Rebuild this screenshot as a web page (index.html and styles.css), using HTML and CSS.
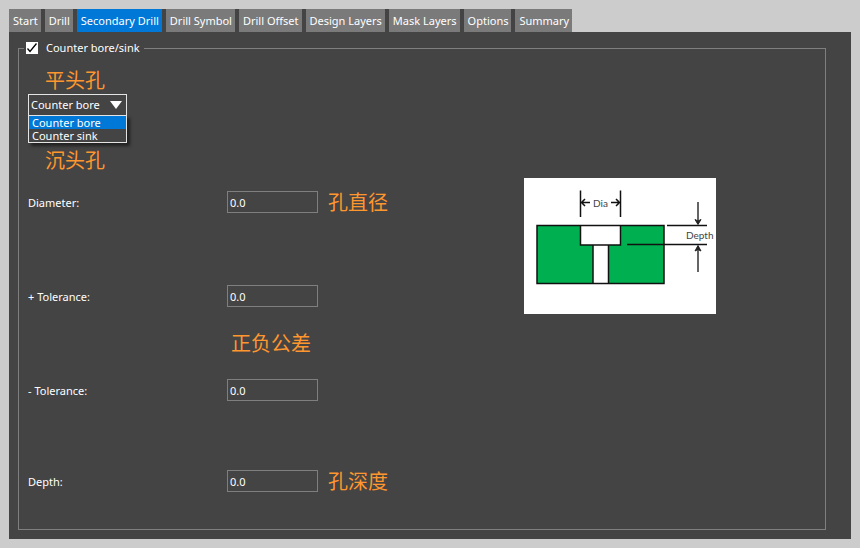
FILE: index.html
```html
<!DOCTYPE html>
<html lang="zh-CN">
<head>
<meta charset="utf-8">
<title>Secondary Drill</title>
<link rel="stylesheet" href="styles.css">
</head>
<body>
<nav class="tabs" role="tablist">
  <button class="tab" type="button" role="tab">Start</button>
  <button class="tab" type="button" role="tab">Drill</button>
  <button class="tab active" type="button" role="tab" aria-selected="true">Secondary Drill</button>
  <button class="tab" type="button" role="tab">Drill Symbol</button>
  <button class="tab" type="button" role="tab">Drill Offset</button>
  <button class="tab" type="button" role="tab">Design Layers</button>
  <button class="tab" type="button" role="tab">Mask Layers</button>
  <button class="tab" type="button" role="tab">Options</button>
  <button class="tab" type="button" role="tab">Summary</button>
</nav>
<main class="panel">
  <fieldset class="group">
    <legend class="legend"><input class="check" type="checkbox" id="counter" checked><label for="counter">Counter bore/sink</label></legend>
    <div class="kind">
      <p class="note">平头孔</p>
      <div class="combo">
        <select class="combo-box" aria-label="Counter type">
          <option selected>Counter bore</option>
          <option>Counter sink</option>
        </select>
        <svg class="combo-arrow" viewBox="0 0 12 8" aria-hidden="true"><path d="M0 0H12L6 8Z" fill="#fff"/></svg>
        <ul class="combo-list" role="listbox" aria-label="Counter type options">
          <li class="choice selected" role="option" aria-selected="true">Counter bore</li>
          <li class="choice" role="option">Counter sink</li>
        </ul>
      </div>
      <p class="note">沉头孔</p>
    </div>
    <div class="details">
      <div class="fields">
        <div class="row"><label class="caption" for="diameter">Diameter:</label><input class="field" id="diameter" type="text" value="0.0"><span class="note">孔直径</span></div>
        <div class="tolerance">
          <div class="row"><label class="caption" for="plus">+ Tolerance:</label><input class="field" id="plus" type="text" value="0.0"></div>
          <div class="row"><span class="note between">正负公差</span></div>
          <div class="row"><label class="caption" for="minus">- Tolerance:</label><input class="field" id="minus" type="text" value="0.0"></div>
        </div>
        <div class="row"><label class="caption" for="depth">Depth:</label><input class="field" id="depth" type="text" value="0.0"><span class="note">孔深度</span></div>
      </div>
      <svg class="diagram" viewBox="0 0 192 136" role="img" aria-label="Counter bore section">
        <rect width="192" height="136" fill="#fff"/>
        <rect x="13" y="47.500" width="127" height="58" fill="#00b050"/>
        <path d="M56.500 47.500H96.500V67H84.500V105.500H69V67H56.500Z" fill="#fff"/>
        <g fill="none" stroke="#111" stroke-width="1.500">
          <rect x="13" y="47.500" width="127" height="58"/>
          <path d="M56.500 47.500V67H96.500V47.500M69 67V105.500M84.500 67V105.500"/>
          <path d="M56.500 12.500V39M96.500 12.500V39M143 47.500H183M103 66.500H183"/>
          <path d="M57.500 24.500H66M61 21L57.500 24.500L61 28M95.500 24.500H87M92 21L95.500 24.500L92 28"/>
          <path d="M174 24V46M174 68V94" stroke="#333"/>
        </g>
        <path d="M171 41.500L174 43L177 41.500L174 46.500ZM171 73L174 71.500L177 73L174 67.500Z" fill="#222" stroke="#222"/>
        <text class="diagram-text" x="69" y="29">Dia</text>
        <text class="diagram-text" x="162" y="61">Depth</text>
      </svg>
    </div>
  </fieldset>
</main>
</body>
</html>
```
FILE: styles.css
```css
* { box-sizing: border-box; }

body {
  display: flex;
  flex-direction: column;
  min-height: 100vh;
  margin: 0;
  padding: 9px;
  background: #ccc;
  color: #fff;
  font: 11px/16px "Noto Sans", "Noto Sans CJK SC", sans-serif;
}

button, input, select { font: inherit; color: inherit; }

.tabs {
  display: flex;
  gap: 4px;
  align-self: flex-start;
  background: #444;
}

.tab {
  height: 23px;
  padding: 0 3px 0 4px;
  border: 0;
  background: #7a7a7a;
  white-space: nowrap;
}

.tab.active { background: #0078d7; }

.panel {
  display: flex;
  flex: 1;
  padding: 8px 25px 9px 9px;
  background: #444;
}

.group {
  flex: 1;
  min-width: 0;
  margin: 0;
  padding: 0 0 0 5px;
  border: 1px solid #7f7f7f;
}

.legend {
  display: flex;
  align-items: center;
  gap: 8px;
  padding: 0 4px 0 2px;
}

.check {
  appearance: none;
  width: 12px;
  height: 12px;
  margin: 0;
  background: #fff;
}

.check:checked {
  background: #fff url("data:image/svg+xml,%3Csvg xmlns='http://www.w3.org/2000/svg' viewBox='0 0 12 12'%3E%3Cpath d='M1.500 6.500L4 9.500L10.500 1.500' fill='none' stroke='%23000' stroke-width='1.300'/%3E%3C/svg%3E");
}

.note {
  margin: 0;
  color: #ff962e;
  font-family: "Noto Sans CJK SC", sans-serif;
  font-size: 20px;
  line-height: 20px;
}

.kind { padding: 14px 0 8px 4px; }
.kind .note { padding-left: 17px; }

.combo {
  position: relative;
  width: 99px;
  margin: 4px 0 34px;
}

.combo-box {
  display: block;
  appearance: none;
  width: 100%;
  height: 22px;
  padding: 0 2px;
  border: 1px solid #e4e4e4;
  border-radius: 0;
  background: #444;
}

.combo-arrow {
  position: absolute;
  top: 7px;
  right: 5px;
  width: 12px;
  height: 8px;
  pointer-events: none;
}

.combo-list {
  position: absolute;
  top: 21px;
  left: 0;
  width: 100%;
  margin: 0;
  padding: 0;
  border: 1px solid #e4e4e4;
  background: #444;
  box-shadow: 3px 3px 3px rgba(0, 0, 0, 0.5);
  list-style: none;
}

.choice {
  padding: 0 3px;
  line-height: 13px;
}

.choice.selected { background: #0078d7; }

.details {
  display: grid;
  grid-template-columns: 1.65fr 1fr;
  align-items: start;
  padding-left: 4px;
}

.fields { padding-top: 13px; }

.row {
  display: grid;
  grid-template-columns: 199px 91px auto;
  align-items: center;
  height: 22px;
}

.caption { padding-top: 2px; }
.row .note { padding-left: 10px; white-space: nowrap; }
.row .between { grid-column: 2 / 4; padding-left: 4px; }

.tolerance {
  display: grid;
  gap: 25px;
  margin: 72px 0 69px;
}

.field {
  width: 100%;
  height: 22px;
  padding: 0 2px;
  border: 1px solid #7f7f7f;
  border-radius: 0;
  background: #444;
}

.diagram {
  width: 192px;
  height: 136px;
}

.diagram-text {
  fill: #444;
  font-family: Lato, sans-serif;
  font-size: 10px;
}
```
